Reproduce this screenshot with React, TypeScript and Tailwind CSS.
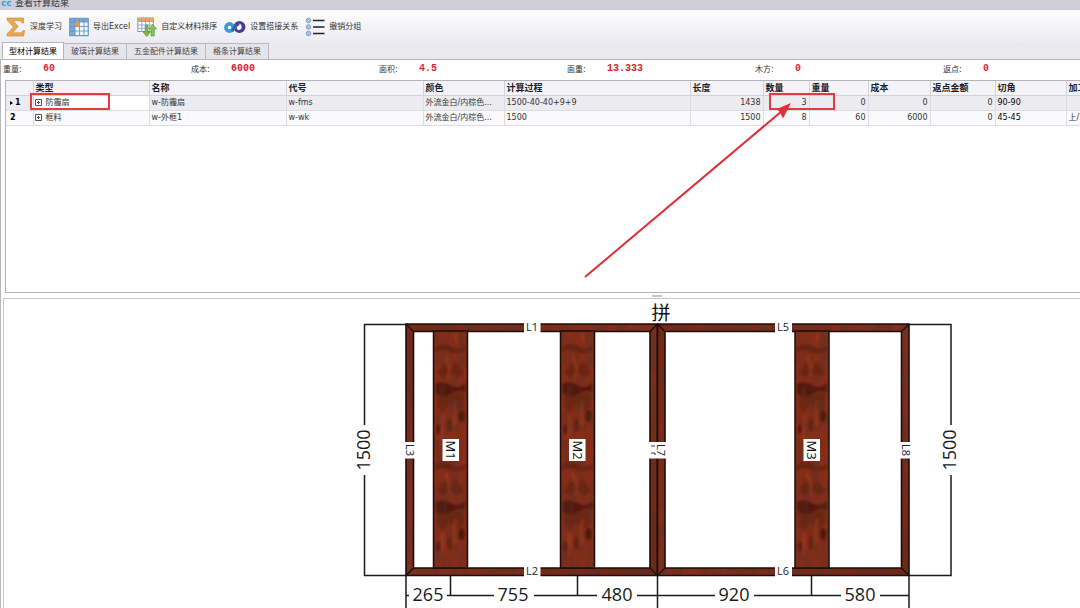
import type { ReactNode } from 'react';

const stats = [
  { label: '重量:', value: '60' },
  { label: '成本:', value: '6000' },
  { label: '面积:', value: '4.5' },
  { label: '面重:', value: '13.333' },
  { label: '木方:', value: '0' },
  { label: '返点:', value: '0' },
];

const tabs = ['型材计算结果', '玻璃计算结果', '五金配件计算结果', '格条计算结果'];

const headers = ['', '类型', '名称', '代号', '颜色', '计算过程', '长度', '数量', '重量', '成本', '返点金额', '切角', '加工'];

const rows = [
  {
    id: '1',
    type: '防霾扇',
    cells: ['w-防霾扇', 'w-fms', '外流金白/内棕色...', '1500-40-40+9+9'],
    numbers: ['1438', '3', '0', '0', '0'],
    angle: '90-90',
    work: '',
  },
  {
    id: '2',
    type: '框料',
    cells: ['w-外框1', 'w-wk', '外流金白/内棕色...', '1500'],
    numbers: ['1500', '8', '60', '6000', '0'],
    angle: '45-45',
    work: '上/下',
  },
];

function SigmaIcon() {
  return (
    <svg className="h-5 w-5" viewBox="0 0 20 20">
      <path
        d="M1 1h16.500v5h-1.500c-.4-1.700-1.400-2.200-3.400-2.200H7l5.200 5.700-6 6.300h7.200c2 0 3-.6 3.600-2.300h1.500l-.7 5.500H1v-2l6.400-7L1 3z"
        fill="#eda84c"
        stroke="#c9822f"
        strokeWidth=".6"
      />
    </svg>
  );
}

function SheetIcon() {
  return (
    <svg className="h-5 w-5" viewBox="0 0 20 20">
      <rect x=".8" y="1.300" width="18.400" height="17.400" fill="#eef5fc" stroke="#4b7fb8" />
      <path d="M1 1.500h18v3.500H1z M1 5h5v13.500H1z" fill="#7ba9d6" />
      <path d="M6 1.500v17M10.500 1.500v17M15 1.500v17M1 5h18M1 9.500h18M1 14h18" stroke="#5d8dc2" strokeWidth=".8" />
      <path d="M6 4.500h4.500v5H6z" fill="#ee9440" />
    </svg>
  );
}

function SortIcon() {
  return (
    <svg className="h-5 w-5" viewBox="0 0 20 20">
      <rect x=".8" y="1" width="15.500" height="13.500" fill="#fff" stroke="#6f9cc8" />
      <path d="M1 1h15v3.500H1z" fill="#f0a862" />
      <path d="M1 4.500h15M1 8h15M1 11.300h15M4.800 1v13.500M8.600 1v13.500M12.400 1v13.500" stroke="#7b9fc5" strokeWidth=".8" />
      <path d="M11 8v7h2.200L9.800 19.500 6 15h2.200V8z" fill="#7fb843" stroke="#4f8a2a" strokeWidth=".6" />
      <path d="M14 19v-7h-2l3.600-4.500L19.500 12h-2.200v7z" fill="#8dc455" stroke="#4f8a2a" strokeWidth=".6" />
    </svg>
  );
}

function LinkIcon() {
  return (
    <svg className="h-5 w-[22px]" viewBox="1 0 22 20">
      <circle cx="6.500" cy="10.500" r="3.600" fill="none" stroke="#3a9bd3" strokeWidth="3.600" />
      <circle cx="16.500" cy="10" r="4" fill="#4b3d96" stroke="#4b3d96" strokeWidth="4" />
      <path d="M9 14l4.500-6" stroke="#3267b0" strokeWidth="3" />
      <path d="M16.500 6.500c3 2 3 6-.5 6.500-2.500 0-3-2.500-1-4 1.500-.5 1.500-1.500 1.500-2.500z" fill="#fff" />
    </svg>
  );
}

function ListIcon() {
  return (
    <svg className="h-5 w-5" viewBox="0 0 20 20">
      {[3.5, 10, 16.5].map((y) => (
        <g key={y}>
          <circle cx="3.500" cy={y} r="2.300" fill="#a9c0e0" stroke="#6c8cbb" strokeWidth=".7" />
          <path d={`M8 ${y}h11.500`} stroke="#222" strokeWidth="1.500" />
        </g>
      ))}
    </svg>
  );
}

function ToolButton({ icon, label }: { icon: ReactNode; label: string }) {
  return (
    <button type="button" className="flex shrink-0 items-center gap-1 whitespace-nowrap">
      {icon}
      {label}
    </button>
  );
}

function Plank({ x }: { x: number }) {
  return (
    <g transform={`translate(${x} 331)`}>
      <rect width="34" height="237" fill="#852d18" />
      {[0, 118].map((y) => (
        <g key={y} transform={`translate(0 ${y})`} filter="url(#soften)">
          <path d="M2 16q9-5 16 0t14-1v5q-11 3-18 0T2 21z" fill="#3a1008" opacity=".45" />
          <path d="M2 53q7-4 15 1t15-2v9q-8-3-15 2T2 62z" fill="#240a05" opacity=".5" />
          <path d="M4 62h26v14l-8 3-6-6-7 8-5-6z" fill="#3c1209" opacity=".35" />
          <path d="M4 42l7-11 6 8 5-9 8 12-6 4-7-5-7 6z" fill="#4d160b" opacity=".45" />
          <ellipse cx="28" cy="85" rx="3" ry="6" fill="#2c0c06" opacity=".7" />
          <ellipse cx="5" cy="98" rx="2" ry="5" fill="#2c0c06" opacity=".5" />
          <ellipse cx="16" cy="94" rx="2" ry="7" fill="#3a1108" opacity=".5" />
          <path d="M12 24q5 12 3 22M22 70q-3 15 0 26M9 84v24M24 3q-3 5 0 9" stroke="#a83f24" strokeWidth="3" fill="none" opacity=".5" />
        </g>
      ))}
      <rect width="34" height="237" filter="url(#grain)" opacity=".4" />
      <rect width="34" height="237" fill="none" stroke="#1c0d0a" strokeWidth="1.500" />
    </g>
  );
}

// one sash: four mitred profiles around an opening
function Frame({ x, width }: { x: number; width: number }) {
  const r = x + width;
  const shape = `M${x} 324H${r}V575.500H${x}z M${x + 7.5} 331.500V568H${r - 7.5}V331.500z`;
  return (
    <g>
      <path d={shape} fill="url(#bar)" fillRule="evenodd" />
      <path d={shape} fillRule="evenodd" filter="url(#grain)" opacity=".5" />
      <path d={shape} fill="none" stroke="#1c0d0a" strokeWidth="1.600" />
      <path
        d={`M${x} 324l7.500 7.500M${r} 324l-7.500 7.500M${x} 575.500l7.500-7.500M${r} 575.500l-7.500-7.500`}
        stroke="#1c0d0a"
        strokeWidth="1.200"
      />
    </g>
  );
}

function Drawing() {
  return (
    <svg className="h-[309px] w-[640px] shrink-0 overflow-visible" viewBox="344 299 640 309" role="img" aria-label="窗型图">
      <defs>
        <filter id="soften">
          <feGaussianBlur stdDeviation="1.200" />
        </filter>
        <filter id="grain" x="0" y="0" width="1" height="1">
          <feTurbulence type="fractalNoise" baseFrequency=".12 .06" numOctaves="3" seed="4" />
          <feColorMatrix values="0 0 0 0 .1  0 0 0 0 .03  0 0 0 0 .02  3 0 0 0 -1.100" />
          <feComposite in2="SourceGraphic" operator="in" />
        </filter>
        <linearGradient id="bar" x1="0" y1="0" x2="1" y2="1">
          <stop offset="0" stopColor="#752817" />
          <stop offset=".5" stopColor="#82301d" />
          <stop offset="1" stopColor="#702615" />
        </linearGradient>
      </defs>

      <Frame x={406} width={251.5} />
      <Frame x={657.5} width={251.5} />
      <Plank x={433.5} />
      <Plank x={560.5} />
      <Plank x={795} />

      <g fill="#fff">
        <rect x="524" y="322" width="16.500" height="11" />
        <rect x="775" y="322" width="17" height="11" />
        <rect x="524" y="566" width="16.500" height="11" />
        <rect x="775" y="566" width="17" height="11" />
        <rect x="404" y="442" width="11" height="16.500" />
        <rect x="649" y="442" width="17.500" height="16.500" />
        <rect x="900" y="442" width="11" height="16.500" />
        <rect x="442.500" y="439" width="16.500" height="22" />
        <rect x="569" y="439" width="16.500" height="22" />
        <rect x="803.500" y="439" width="16.500" height="22" />
      </g>

      <g className="font-['Open_Sans',sans-serif] text-[11px]" fill="#222" textAnchor="middle">
        <text x="532" y="331">L1</text>
        <text x="783" y="331">L5</text>
        <text x="532" y="575">L2</text>
        <text x="783" y="575">L6</text>
        <text transform="translate(406 450) rotate(90)">L3</text>
        <text transform="translate(657 450) rotate(90)">L7</text>
        <text transform="translate(902 450) rotate(90)">L8</text>
      </g>
      <path d="M651 446h4M651 453h4v2" stroke="#333" fill="none" />
      <g className="font-['Open_Sans',sans-serif] text-[13px]" fill="#111" textAnchor="middle">
        <text transform="translate(446 450) rotate(90)">M1</text>
        <text transform="translate(573 450) rotate(90)">M2</text>
        <text transform="translate(807 450) rotate(90)">M3</text>
      </g>

      <g fill="none" stroke="#1a1a1a" strokeWidth="1.500">
        <path d="M406 324.500H364.500V425M364.500 475V575.500H406" />
        <path d="M909 324.500H951V425M951 475V575.500H909" />
        <path d="M406 575V608M657.500 575V608M909 575V608M450.500 575V595.500M577.500 575V595.500M811.500 575V595.500" />
        <path d="M406 595.500h3M447 595.500H494M534 595.500H597M637 595.500H715M754 595.500H841M880 595.500H909" />
      </g>
      <g className="font-['Open_Sans',sans-serif] text-[18px]" fill="#1a1a1a" textAnchor="middle">
        <text x="428" y="601">265</text>
        <text x="513" y="601">755</text>
        <text x="617" y="601">480</text>
        <text x="734" y="601">920</text>
        <text x="860" y="601">580</text>
        <text transform="translate(370 450) rotate(-90)">1500</text>
        <text transform="translate(956 450) rotate(-90)">1500</text>
      </g>
      <text className="font-['Noto_Sans_CJK_SC',sans-serif] text-[19px]" x="661" y="320" textAnchor="middle" fill="#111">
        拼
      </text>
    </svg>
  );
}

export default function App() {
  return (
    <div className="flex min-h-screen flex-col overflow-hidden bg-white font-['DejaVu_Sans','Noto_Sans_CJK_SC',sans-serif] text-[8px] leading-3 text-[#333]">
      <header className="flex h-[10px] items-end gap-1 overflow-hidden bg-[#cfcdd8] pb-px pl-px text-[9px] leading-3">
        <span className="w-[10px] font-bold text-[#35a3d5]">cc</span>
        <h1>查看计算结果</h1>
      </header>

      <div className="flex h-8 items-center gap-[7px] bg-linear-to-b from-white to-[#ebebf3] px-[6px] pt-[2px]">
        <ToolButton icon={<SigmaIcon />} label="深度学习" />
        <ToolButton icon={<SheetIcon />} label="导出Excel" />
        <ToolButton icon={<SortIcon />} label="自定义材料排序" />
        <ToolButton icon={<LinkIcon />} label="设置搭接关系" />
        <ToolButton icon={<ListIcon />} label="撤销分组" />
      </div>

      <nav className="flex h-[18px] items-end border-b border-[#b5b5bb] bg-[#e9e9ee] pl-[2px]">
        {tabs.map((tab, i) => (
          <button
            key={tab}
            type="button"
            className={
              i === 0
                ? 'h-[17px] border border-b-0 border-[#b5b5bb] bg-white px-[6px] pt-px text-black'
                : 'h-4 border-t border-r border-[#b9b9c0] bg-[#e4e4ea] px-[7px] text-[#444]'
            }
          >
            {tab}
          </button>
        ))}
      </nav>

      <main className="flex grow flex-col border-l border-[#b5b5bb]">
        <dl className="flex h-5 items-center overflow-hidden pl-[2px]">
          {stats.map((s) => (
            <div key={s.label} className="flex w-[188px] shrink-0 items-center">
              <dt className="w-10">{s.label}</dt>
              <dd className="pb-[2px] font-['Liberation_Mono',monospace] text-[10px] font-bold text-[#e0242c]">{s.value}</dd>
            </div>
          ))}
        </dl>

        <section className="relative ml-1 h-[213px] overflow-hidden border-y border-l border-[#b4b4ba]">
          <table className="w-[1130px] table-fixed border-collapse text-left">
            <colgroup>
              <col className="w-[27px]" />
              <col className="w-[116px]" />
              <col className="w-[137px]" />
              <col className="w-[137px]" />
              <col className="w-[81px]" />
              <col className="w-[186px]" />
              <col className="w-[73px]" />
              <col className="w-[46px]" />
              <col className="w-[59px]" />
              <col className="w-[62px]" />
              <col className="w-[65px]" />
              <col className="w-[71px]" />
              <col />
            </colgroup>
            <thead>
              <tr className="h-[14px] bg-[#f4f4f8] text-[9px] text-[#1d1d28]">
                {headers.map((h, i) => (
                  <th key={i} className="border-r border-b border-[#d2d2da] px-[2px] py-0 font-bold whitespace-nowrap">
                    {h}
                  </th>
                ))}
              </tr>
            </thead>
            <tbody>
              {rows.map((row, i) => (
                <tr
                  key={row.id}
                  className={
                    i === 0
                      ? 'h-[15px] bg-[#ececf0] *:border-r *:border-b *:border-[#dcdce2] *:py-0'
                      : 'h-[15px] bg-[#fafafd] *:border-r *:border-b *:border-[#dcdce2] *:py-0'
                  }
                >
                  <th className="pl-1 font-bold whitespace-nowrap text-black">
                    <span className="flex items-center">
                      {i === 0 && <span className="mr-[2px] border-y-2 border-l-3 border-y-transparent border-l-black" />}
                      {row.id}
                    </span>
                  </th>
                  <td className={i === 0 ? 'bg-white pl-px' : 'pl-px'}>
                    <span className="flex items-center gap-1">
                      <button type="button" aria-label="展开">
                        <svg className="h-[7px] w-[7px]" viewBox="0 0 7 7" fill="none" stroke="#555">
                          <path d="M.5.5h6v6h-6zM2 3.500h3M3.500 2v3" />
                        </svg>
                      </button>
                      {row.type}
                    </span>
                  </td>
                  {row.cells.map((c, j) => (
                    <td key={j} className="overflow-hidden px-[2px] whitespace-nowrap">
                      {c}
                    </td>
                  ))}
                  {row.numbers.map((n, j) => (
                    <td key={j} className="px-[2px] text-right">
                      {n}
                    </td>
                  ))}
                  <td className="px-[2px] text-black">{row.angle}</td>
                  <td className="px-[2px] whitespace-nowrap">{row.work}</td>
                </tr>
              ))}
            </tbody>
          </table>
          <div className="absolute top-[12px] left-[24px] h-[17px] w-[80px] border-2 border-[#e03c42]" />
          <div className="absolute top-[12px] left-[763px] h-[17px] w-[66px] border-2 border-[#e03c42]" />
          <svg className="absolute top-0 left-[570px] h-[211px] w-[240px]" viewBox="576 81 240 211">
            <path d="M585 277L782 111" stroke="#e02f36" strokeWidth="2" />
            <path d="M791 103l-14 6 3 3.500 3 6z" fill="#e02f36" />
          </svg>
        </section>

        <div className="flex h-[5px] items-center pl-[651px]">
          <span className="h-[2px] w-[10px] bg-[#c8c8cc]" />
        </div>

        <section className="ml-[2px] flex grow border-t border-l border-[#c4c4ca] pl-[340px]">
          <Drawing />
        </section>
      </main>
    </div>
  );
}
